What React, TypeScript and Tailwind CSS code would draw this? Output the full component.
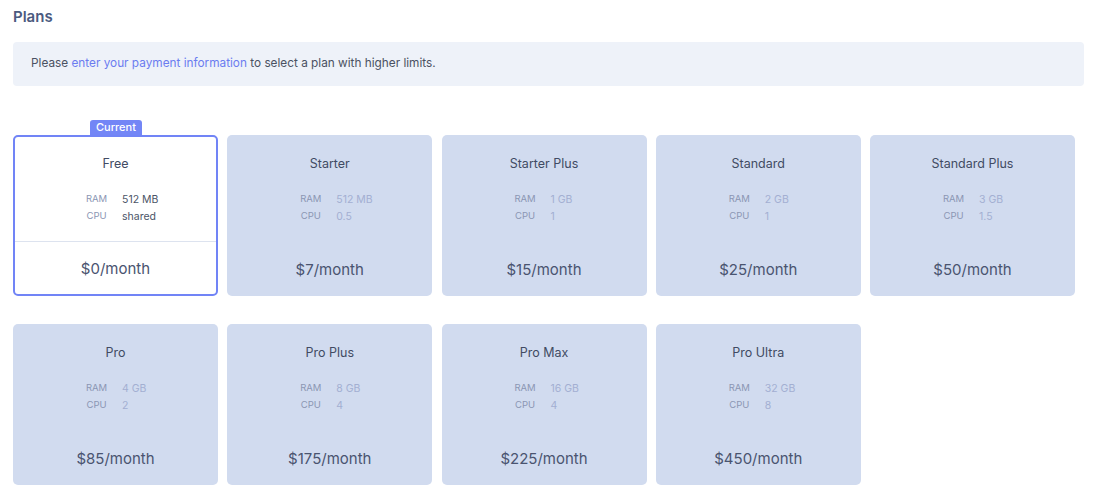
const plans = [
  { name: "Free", ram: "512 MB", cpu: "shared", price: "$0/month", current: true },
  { name: "Starter", ram: "512 MB", cpu: "0.5", price: "$7/month" },
  { name: "Starter Plus", ram: "1 GB", cpu: "1", price: "$15/month" },
  { name: "Standard", ram: "2 GB", cpu: "1", price: "$25/month" },
  { name: "Standard Plus", ram: "3 GB", cpu: "1.5", price: "$50/month" },
  { name: "Pro", ram: "4 GB", cpu: "2", price: "$85/month" },
  { name: "Pro Plus", ram: "8 GB", cpu: "4", price: "$175/month" },
  { name: "Pro Max", ram: "16 GB", cpu: "4", price: "$225/month" },
  { name: "Pro Ultra", ram: "32 GB", cpu: "8", price: "$450/month" },
];

type Plan = (typeof plans)[number] & { current?: boolean };

function PlanCard({ plan }: { plan: Plan }) {
  const cur = !!plan.current;
  return (
    <div className="relative">
      {cur && (
        <div className="absolute left-[77px] top-[-15px] h-[15px] px-[6px] rounded-t-[3px] bg-[#7386f6] text-white text-[11px] leading-[15px] font-medium">
          Current
        </div>
      )}
      <div
        className={
          cur
            ? "h-[161px] rounded-[5px] border-2 border-[#7184f6] bg-white flex flex-col"
            : "h-[161px] rounded-[5px] bg-[#d1dbef] flex flex-col"
        }
      >
        <div className={cur ? "pt-[19px]" : "pt-[21px]"}>
          <div className="text-center text-[12.5px] leading-[16px] text-[#414b63]">
            {plan.name}
          </div>
          <div className={cur ? "mt-[19px] pl-[66px]" : "mt-[19px] pl-[68px]"}>
            {[
              ["RAM", plan.ram],
              ["CPU", plan.cpu],
            ].map(([k, v]) => (
              <div key={k} className="flex items-center h-[17px]">
                <span className="w-[31px] text-center text-[9.5px] text-[#8b96b3]">{k}</span>
                <span
                  className={
                    cur
                      ? "ml-[10px] text-[10.5px] text-[#4b5467]"
                      : "ml-[10px] text-[10.5px] text-[#a3afd2]"
                  }
                >
                  {v}
                </span>
              </div>
            ))}
          </div>
        </div>
        {cur ? (
          <div className="mt-auto border-t border-[#dde3ef] h-[53px] pt-[2px] flex items-center justify-center text-[15px] text-[#4a5470]">
            {plan.price}
          </div>
        ) : (
          <div className="mt-auto h-[53px] pt-[2px] flex items-center justify-center text-[15px] text-[#4a5470]">
            {plan.price}
          </div>
        )}
      </div>
    </div>
  );
}

export default function App() {
  return (
    <div className="min-h-screen bg-white pl-[13px] pr-[12px] pt-[7px] font-['Inter',sans-serif]">
      <h1 className="text-[15px] leading-[20px] font-semibold text-[#4b5a80]">Plans</h1>
      <div className="mt-[15px] h-[44px] rounded-[4px] bg-[#eef2f9] px-[18px] flex items-center text-[11.8px] text-[#4a5162]">
        <p>
          Please <a className="text-[#6b7cf0] cursor-pointer">enter your payment information</a> to
          select a plan with higher limits.
        </p>
      </div>
      <div className="mt-[49px] grid grid-cols-[repeat(5,205px)] gap-x-[9.25px] gap-y-[28px]">
        {plans.map((p) => (
          <PlanCard key={p.name} plan={p} />
        ))}
      </div>
    </div>
  );
}
